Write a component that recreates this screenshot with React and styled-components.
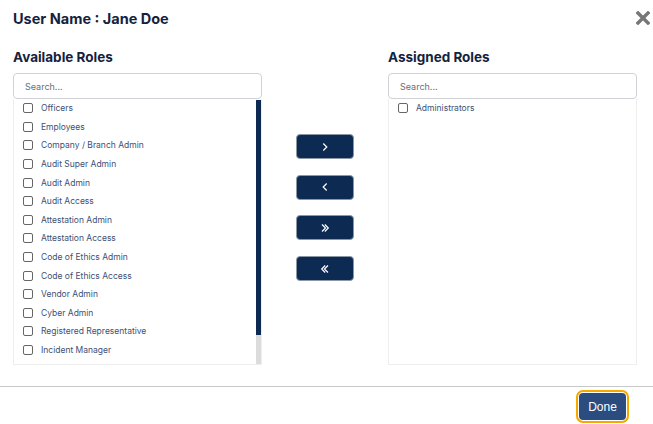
import React from "react";
import styled, { createGlobalStyle } from "styled-components";

const NAVY = "#0d2a52";

const available = [
    "Officers",
    "Employees",
    "Company / Branch Admin",
    "Audit Super Admin",
    "Audit Admin",
    "Audit Access",
    "Attestation Admin",
    "Attestation Access",
    "Code of Ethics Admin",
    "Code of Ethics Access",
    "Vendor Admin",
    "Cyber Admin",
    "Registered Representative",
    "Incident Manager",
    "Incident Access",
    "Training Admin",
];

const assigned = ["Administrators"];

function RoleList({ title, roles, scroll }) {
    return (
        <Column>
            <Heading>{title}</Heading>
            <Search placeholder="Search..." />
            <ListBox>
                <Items>
                    {roles.map((r) => (
                        <Item key={r}>
                            <Check />
                            <span>{r}</span>
                        </Item>
                    ))}
                </Items>
                {scroll && (
                    <ScrollTrack>
                        <Thumb />
                    </ScrollTrack>
                )}
            </ListBox>
        </Column>
    );
}

function Chevron({ double, left }) {
    return (
        <svg width="10" height="10" viewBox="0 0 10 10" fill="none">
            <g
                stroke="#ffffff"
                strokeWidth="1.2"
                transform={left ? "translate(10 0) scale(-1 1)" : undefined}
            >
                {double ? (
                    <>
                        <path d="M2 1.5 L5.5 5 L2 8.5" />
                        <path d="M4.8 1.5 L8.3 5 L4.8 8.5" />
                    </>
                ) : (
                    <path d="M3.3 1.5 L6.8 5 L3.3 8.5" />
                )}
            </g>
        </svg>
    );
}

export default function App() {
    return (
        <>
            <Global />
            <Modal>
                <Header>
                    <Title>User Name : Jane Doe</Title>
                    <Close>
                        <svg width="14" height="14" viewBox="0 0 14 14">
                            <path
                                d="M2 2 L12 12 M12 2 L2 12"
                                stroke="#777"
                                strokeWidth="3.4"
                                strokeLinecap="square"
                            />
                        </svg>
                    </Close>
                </Header>
                <Body>
                    <RoleList title="Available Roles" roles={available} scroll />
                    <Buttons>
                        <MoveButton><Chevron /></MoveButton>
                        <MoveButton><Chevron left /></MoveButton>
                        <MoveButton><Chevron double /></MoveButton>
                        <MoveButton><Chevron double left /></MoveButton>
                    </Buttons>
                    <RoleList title="Assigned Roles" roles={assigned} />
                </Body>
                <Footer>
                    <DoneButton>Done</DoneButton>
                </Footer>
            </Modal>
        </>
    );
}

const Global = createGlobalStyle`
    body {
        margin: 0;
        background: #ffffff;
        font-family: Inter, "Noto Sans", sans-serif;
    }
`;

const Modal = styled.div`
    width: 653px;
    height: 424px;
    display: flex;
    flex-direction: column;
`;

const Header = styled.div`
    display: flex;
    justify-content: space-between;
    align-items: center;
    padding: 8px 3px 0 13px;
    height: 20px;
`;

const Title = styled.h1`
    margin: 0;
    font-size: 14.5px;
    font-weight: 700;
    color: #14223d;
`;

const Close = styled.div`
    width: 14px;
    height: 14px;
    display: flex;
`;

const Body = styled.div`
    display: flex;
    padding: 21px 16px 0 13px;
    gap: 34px;
`;

const Column = styled.div`
    width: 250px;
    display: flex;
    flex-direction: column;
`;

const Heading = styled.h2`
    margin: 0 0 7px;
    font-size: 13.5px;
    font-weight: 700;
    color: #14223d;
    line-height: 17px;
`;

const Search = styled.input`
    box-sizing: border-box;
    height: 26px;
    width: 100%;
    border: 1px solid #cfd3d8;
    border-radius: 4px;
    padding: 0 11px;
    font-family: inherit;
    font-size: 9px;
    outline: none;
    &::placeholder {
        color: #6b6f76;
    }
`;

const ListBox = styled.div`
    box-sizing: border-box;
    height: 266px;
    border: 1px solid #eeeeee;
    border-top: none;
    display: flex;
    overflow: hidden;
`;

const Items = styled.div`
    flex: 1;
    overflow: hidden;
`;

const ScrollTrack = styled.div`
    width: 5px;
    margin-top: 1px;
    background: #dcdcdc;
    display: flex;
    flex-direction: column;
`;

const Thumb = styled.div`
    height: 89%;
    background: ${NAVY};
`;

const Item = styled.div`
    display: flex;
    align-items: center;
    height: 18.6px;
    padding-left: 9px;
    gap: 8px;
    font-size: 8.5px;
    color: #3e5073;
`;

const Check = styled.span`
    box-sizing: border-box;
    width: 10px;
    height: 10px;
    border: 1px solid #666;
    border-radius: 2px;
    flex-shrink: 0;
`;

const Buttons = styled.div`
    display: flex;
    flex-direction: column;
    gap: 15.7px;
    padding-top: 85px;
`;

const MoveButton = styled.button`
    width: 58px;
    height: 25px;
    border: 1px solid #8c97a6;
    border-radius: 4px;
    background: ${NAVY};
    display: flex;
    align-items: center;
    justify-content: center;
    padding: 0;
`;

const Footer = styled.div`
    margin-top: 21px;
    border-top: 1px solid #c8c8c8;
    display: flex;
    justify-content: flex-end;
    padding: 6px 27px 0 0;
`;

const DoneButton = styled.button`
    width: 47px;
    height: 27px;
    border: none;
    border-radius: 4px;
    background: #2b4c7e;
    color: #ffffff;
    font-family: "Liberation Sans", Arial, sans-serif;
    font-size: 12px;
    outline: 2px solid #f5a800;
    outline-offset: 1px;
    box-shadow: 0 0 0 1px #ffffff;
`;
